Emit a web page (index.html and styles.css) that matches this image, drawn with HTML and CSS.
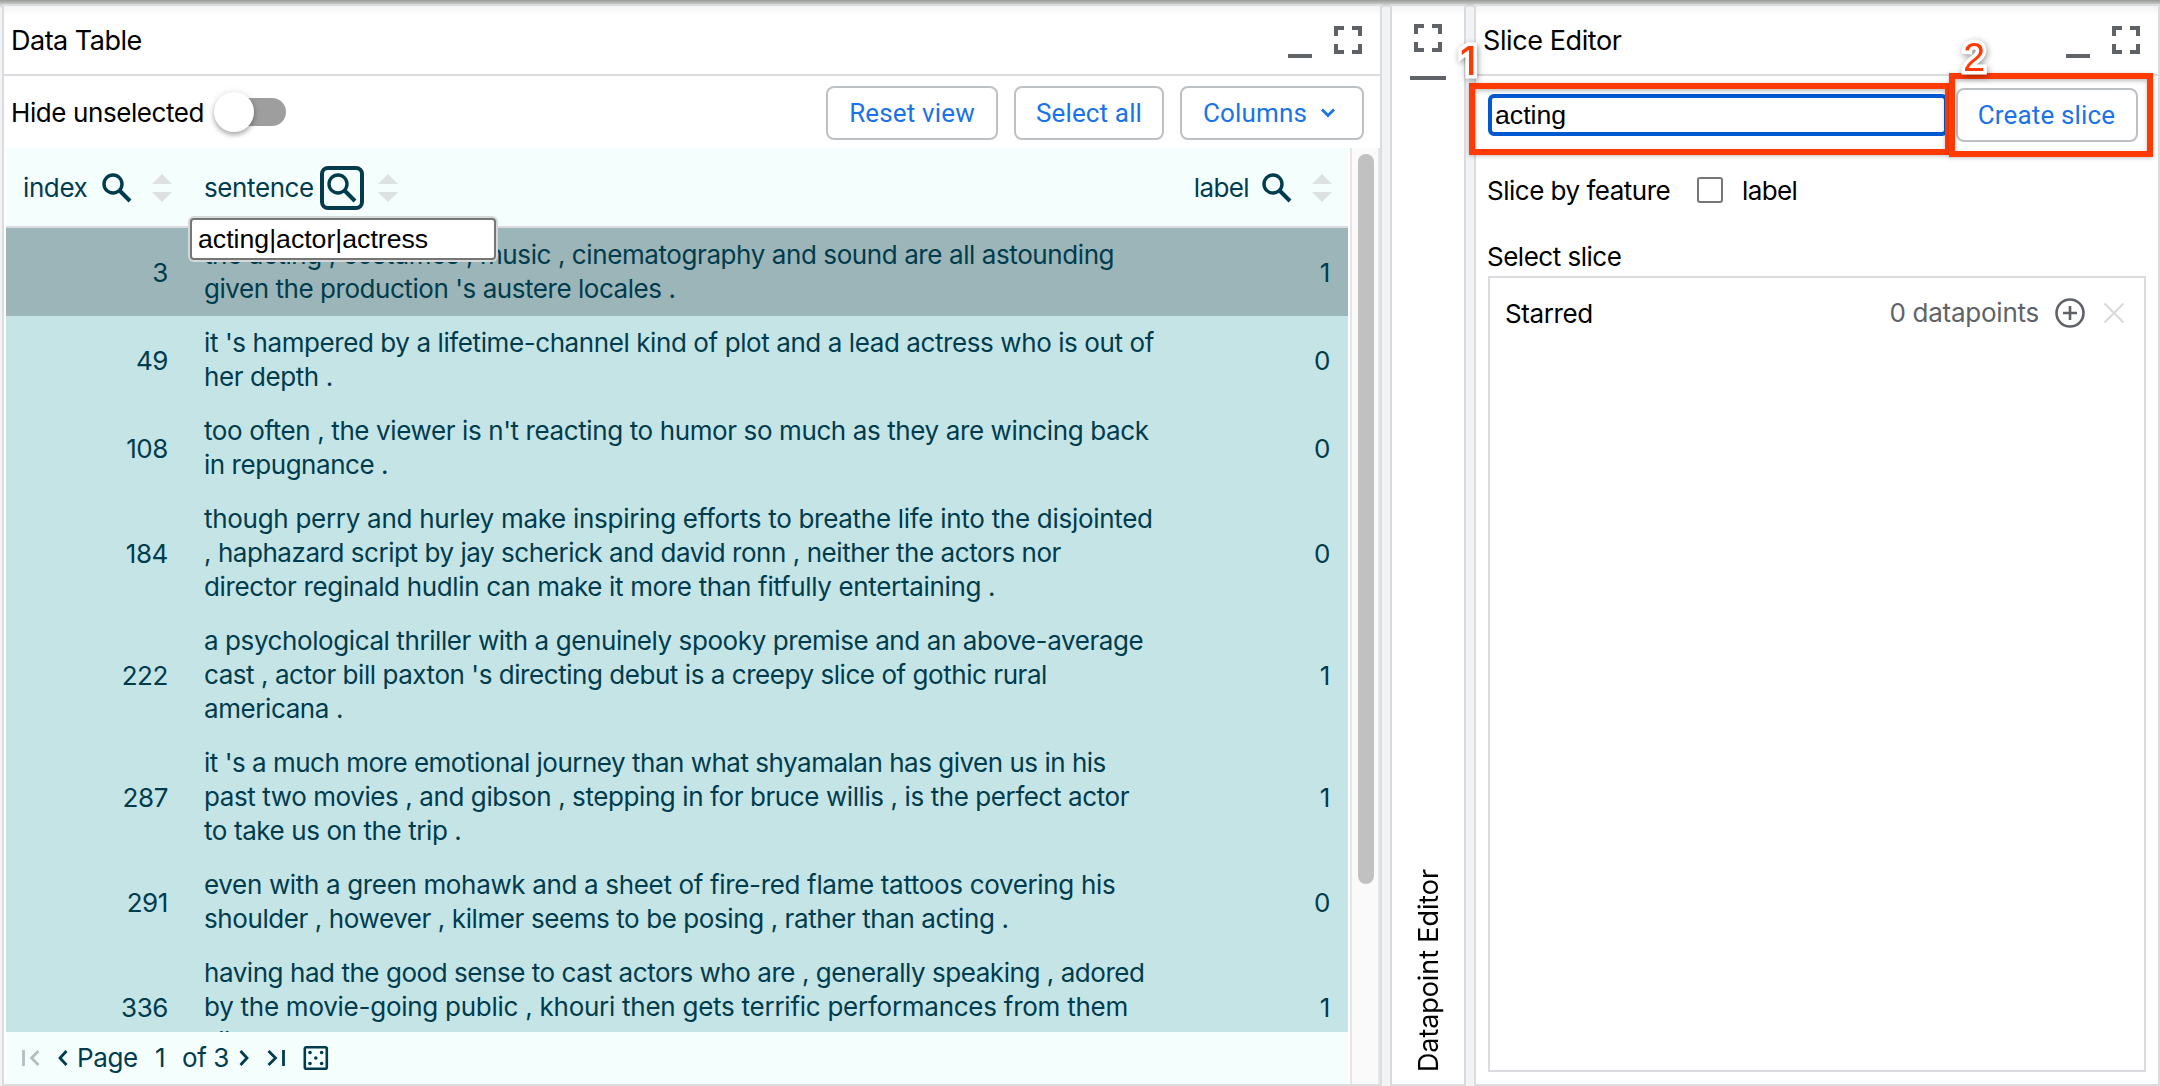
FILE: index.html
```
<!DOCTYPE html>
<html lang="en">
<head>
<meta charset="utf-8">
<title>Data Table and Slice Editor</title>
<link rel="stylesheet" href="styles.css">
</head>
<body>
<svg class="defs" aria-hidden="true">
  <symbol id="full" viewBox="0 0 28 28"><path d="M0 10V0H10V4H4V10ZM18 0H28V10H24V4H18ZM0 18H4V24H10V28H0ZM24 18H28V28H18V24H24Z" fill="#5f6368"/></symbol>
  <symbol id="search" viewBox="0 0 30 30"><circle cx="11" cy="11" r="9" fill="none" stroke="#003c4d" stroke-width="3.4"/><path d="M17.5 17.5L28 28" stroke="#003c4d" stroke-width="4"/></symbol>
  <symbol id="sort" viewBox="0 0 20 28"><path d="M0 10L10 0L20 10ZM0 18H20L10 28Z" fill="#dde1e1"/></symbol>
</svg>
<main class="app">
  <section class="panel data">
    <header class="head"><h1>Data Table</h1><div class="tools"><i class="min"></i><svg class="full"><use href="#full"/></svg></div></header>
    <div class="toolbar">
      <span class="hide">Hide unselected</span><span class="switch"><i></i></span>
      <div class="buttons">
        <button class="btn reset">Reset view</button>
        <button class="btn select">Select all</button>
        <button class="btn cols">Columns<svg width="16" height="10" viewBox="0 0 16 10"><path d="M2 1.5L8 7.5L14 1.5" fill="none" stroke="#1a73e8" stroke-width="2.8"/></svg></button>
      </div>
    </div>
    <div class="body">
      <div class="table">
        <div class="thead">
          <div class="th"><span class="t-index">index</span><svg class="search"><use href="#search"/></svg><svg class="sort"><use href="#sort"/></svg></div>
          <div class="th"><span class="t-sentence">sentence</span><span class="focus"><svg class="search"><use href="#search"/></svg></span><svg class="sort"><use href="#sort"/></svg>
            <div class="popup">acting|actor|actress</div></div>
          <div class="th last"><span class="t-label">label</span><svg class="search"><use href="#search"/></svg><svg class="sort"><use href="#sort"/></svg></div>
        </div>
        <div class="rows">
          <div class="row primary"><b>3</b><p>the acting , costumes , music , cinematography and sound are all astounding<br><span class="snug">given the production 's austere locales .</span></p><b>1</b></div>
          <div class="row"><b>49</b><p>it 's hampered by a lifetime-channel kind of plot and a lead actress who is out of<br>her depth .</p><b>0</b></div>
          <div class="row"><b>108</b><p><span class="open">too often , the viewer is n't reacting to humor so much as they are wincing back</span><br><span class="snug">in repugnance .</span></p><b>0</b></div>
          <div class="row"><b>184</b><p><span class="wide">though perry and hurley make inspiring efforts to breathe life into the disjointed</span><br><span class="snug">, haphazard script by jay scherick and david ronn , neither the actors nor</span><br><span class="roomy">director reginald hudlin can make it more than fitfully entertaining .</span></p><b>0</b></div>
          <div class="row"><b>222</b><p>a psychological thriller with a genuinely spooky premise and an above-average<br><span class="snug">cast , actor bill paxton 's directing debut is a creepy slice of gothic rural</span><br>americana .</p><b>1</b></div>
          <div class="row"><b>287</b><p><span class="tight">it 's a much more emotional journey than what shyamalan has given us in his</span><br>past two movies , and gibson , stepping in for bruce willis , is the perfect actor<br>to take us on the trip .</p><b>1</b></div>
          <div class="row"><b>291</b><p><span class="roomy">even with a green mohawk and a sheet of fire-red flame tattoos covering his</span><br>shoulder , however , kilmer seems to be posing , rather than acting .</p><b>0</b></div>
          <div class="row"><b>336</b><p><span class="snug">having had the good sense to cast actors who are , generally speaking , adored</span><br><span class="widest">by the movie-going public , khouri then gets terrific performances from them</span><br>all .</p><b>1</b></div>
        </div>
        <footer class="pager">
          <svg class="first" width="18" height="16" viewBox="0 0 18 16"><path d="M1.5 0V16M16.5 1L9.5 8L16.5 15" fill="none" stroke="#b4bdbf" stroke-width="2.8"/></svg>
          <svg class="prev" width="10" height="16" viewBox="0 0 10 16"><path d="M8.5 1L2 8L8.5 15" fill="none" stroke="#003c4d" stroke-width="2.8"/></svg>
          <span class="page">Page</span><span class="num">1</span><span class="of">of 3</span>
          <svg class="next" width="10" height="16" viewBox="0 0 10 16"><path d="M1.5 1L8 8L1.5 15" fill="none" stroke="#003c4d" stroke-width="2.8"/></svg>
          <svg class="lastp" width="18" height="16" viewBox="0 0 18 16"><path d="M16.5 0V16M1.5 1L8.5 8L1.5 15" fill="none" stroke="#003c4d" stroke-width="2.8"/></svg>
          <svg class="dice" width="26" height="26" viewBox="0 0 26 26"><rect x="1.8" y="2.3" width="22" height="21.4" rx="1.5" fill="none" stroke="#003c4d" stroke-width="2.6"/><g fill="#003c4d"><circle cx="7" cy="7.5" r="1.8"/><circle cx="18.6" cy="7.5" r="1.8"/><circle cx="12.8" cy="13" r="1.8"/><circle cx="7" cy="18.5" r="1.8"/><circle cx="18.6" cy="18.5" r="1.8"/></g></svg>
        </footer>
      </div>
      <div class="scroll"><i></i></div>
    </div>
  </section>

  <section class="panel point">
    <svg class="full"><use href="#full"/></svg><i class="min"></i>
    <h1>Datapoint Editor</h1>
  </section>

  <section class="panel slice">
    <header class="head"><h1>Slice Editor</h1><div class="tools"><i class="min"></i><svg class="full"><use href="#full"/></svg></div></header>
    <div class="create"><div class="name">acting</div><button class="btn">Create slice</button></div>
    <div class="feature"><span>Slice by feature</span><i class="check"></i><span class="flabel">label</span></div>
    <div class="caption">Select slice</div>
    <div class="list">
      <div class="item"><span class="starred">Starred</span><span class="count">0 datapoints</span>
        <svg class="add" width="32" height="32" viewBox="0 0 32 32"><circle cx="16" cy="16" r="13.5" fill="none" stroke="#5f6368" stroke-width="2.6"/><path d="M16 9V23M9 16H23" stroke="#5f6368" stroke-width="2.6"/></svg>
        <svg class="del" width="22" height="22" viewBox="0 0 22 22"><path d="M1.5 1.5L20.5 20.5M20.5 1.5L1.5 20.5" stroke="#dadce0" stroke-width="2.4"/></svg></div>
    </div>
  </section>
</main>
<div class="mark m1"></div><div class="mark m2"></div>
<span class="tag g1">1</span><span class="tag g2">2</span>
</body>
</html>
```
FILE: styles.css
```
*{box-sizing:border-box}
body{margin:0;width:2160px;height:1086px;overflow:hidden;position:relative;background:#f1f3f4;font:430 26px/34px Inter,sans-serif;letter-spacing:-.41px;color:#000;white-space:nowrap}
svg{display:block;flex:none}
.defs{position:absolute;width:0;height:0}
h1,p{margin:0;font:inherit}
i{display:block;flex:none}
.app{display:flex;gap:8px;height:1086px;padding:4px 0 0 2px;background:linear-gradient(#989b98,#c4c6c6 4px,#f1f3f4 8px)}
.panel{background:linear-gradient(#f4f4f5,#fff 10px);border:2px solid #dadce0;display:flex;flex-direction:column;flex:none}
.data{width:1380px}
.point{width:76px;align-items:center;position:relative}
.slice{width:686px}
.head{height:70px;border-bottom:2px solid #dadce0;display:flex;justify-content:space-between;padding-left:7px;flex:none}
.head h1{font-size:27px;letter-spacing:-.5px;padding-top:18px}
.slice .head h1{letter-spacing:-.4px}
.tools{display:flex;gap:22px;padding:20px 18px 0 0}
.min{width:24px;height:4px;background:#5f6368;margin-top:28px}
.full{width:28px;height:28px}
.toolbar{height:72px;display:flex;align-items:center;padding:0 16px 0 7px;flex:none}
.hide{width:194px;padding-top:1px}
.switch{width:64px;height:28px;border-radius:14px;background:#9e9e9e;margin-left:17px;position:relative}
.switch i{width:40px;height:40px;border-radius:50%;background:#fff;margin:-6px 0 0 -8px;box-shadow:0 3px 4px rgba(0,0,0,.25),0 1px 8px rgba(0,0,0,.14)}
.buttons{display:flex;gap:16px;margin-left:auto;padding-top:2px}
.btn{height:54px;border:2px solid #bdc1c6;border-radius:8px;background:#fff;color:#1a73e8;font:450 26px/34px Roboto,sans-serif;letter-spacing:.15px;padding:0 0 1px;text-align:center;display:flex;align-items:center;justify-content:center;flex:none}
.reset{width:172px}.select{width:150px}.cols{width:184px;gap:13px;padding-right:5px}
.body{display:flex;flex:1;min-height:0;padding-left:2px}
.table{width:1342px;color:#003c4d;display:flex;flex-direction:column}
.thead{height:80px;background:#f4fefd;border-bottom:2px solid #dadce0;display:grid;grid-template-columns:198px 656px 488px;flex:none}
.th{display:flex;align-items:center;position:relative;padding-top:2px}
.th .search{width:30px;height:30px}
.sort{width:20px;height:28px}
.t-index{width:79px;padding-left:17px;margin-right:17px;letter-spacing:-.4px}
.th>.search+.sort{margin-left:20px}
.t-sentence{width:116px;letter-spacing:-.4px}
.focus{width:44px;height:44px;border:4px solid #003c4d;border-radius:8px;padding:3px;box-shadow:0 0 0 2px #fff;margin-right:14px}
.last{justify-content:flex-end;padding-right:16px}
.t-label{margin-right:13px;letter-spacing:-.6px}
.popup{position:absolute;left:-14px;top:70px;width:306px;height:42px;border:2px solid #767676;border-radius:4px;box-shadow:0 0 0 2px #d5d8d8;background:#fff;color:#000;font:26.667px/36px "Liberation Sans",sans-serif;letter-spacing:0;padding:1px 6px;z-index:2}
.rows{flex:1;min-height:0;overflow:hidden;background:#c5e4e6}
.row{display:grid;grid-template-columns:162px 1fr 20px;align-items:center;padding:10px 18px 10px 0;background:#c5e4e6}
.primary{background:#9cb5b8}
.row b{font-weight:430;text-align:right;padding-top:1px}
.row p{padding-left:36px}
.tight{letter-spacing:-.49px}
.snug{letter-spacing:-.45px}
.open{letter-spacing:-.39px}
.roomy{letter-spacing:-.34px}
.wide{letter-spacing:-.29px}
.widest{letter-spacing:-.26px}
.pager{height:52px;background:#f4fefd;display:flex;align-items:center;padding:0 0 0 16px;flex:none}
.prev{margin-left:18px}
.page{width:87px;padding-left:9px}
.num{width:27px}
.of{width:57px}
.lastp{margin-left:18px}
.dice{margin-left:18px}
.scroll{width:30px;margin-left:2px;background:#fafafa;border:solid #e4e5e6;border-width:0 2px;padding:6px 0 0 6px}
.scroll i{width:16px;height:730px;border-radius:8px;background:#c1c1c1}
.point .full{margin-top:18px}
.point .min{width:36px;margin-top:24px}
.point h1{writing-mode:vertical-rl;transform:rotate(180deg);font-size:27px;letter-spacing:-.1px;margin:auto 0 12px 2px}
.create{display:flex;gap:8px;padding:12px 20px 0 12px;height:72px}
.name{width:460px;height:42px;margin-top:6px;border:4px solid #0059d0;border-radius:6px;font:26.667px/34px "Liberation Sans",sans-serif;letter-spacing:0;padding-left:3px}
.create .btn{width:182px;padding-right:1px}
.feature{display:flex;align-items:center;height:34px;margin:25px 0 0 12px;letter-spacing:-.5px}
.feature>span{padding-top:2px}
.feature>span:first-child{width:210px;margin-left:-1px}
.check{width:26px;height:26px;border:2px solid #767676;border-radius:3px;margin-right:19px}
.flabel{letter-spacing:-.6px}
.caption{margin:33px 0 0 11px;height:34px;letter-spacing:-.5px}
.list{margin:2px 12px 12px;flex:1;border:2px solid #dadce0}
.item{display:flex;align-items:center;height:68px;padding:2px 19px 0 15px}
.starred{margin-right:auto;padding-top:2px}
.count{color:#5f6368;letter-spacing:-.25px}
.add{margin-left:15px}
.del{margin-left:17px}
.mark{position:absolute;border:6px solid #ff3a05;box-shadow:0 1px 4px rgba(0,0,0,.25),inset 0 2px 4px rgba(0,0,0,.25)}
.m1{left:1469px;top:83px;width:482px;height:72px}
.m2{left:1949px;top:73px;width:204px;height:84px}
.tag{position:absolute;font:450 40px/40px Inter,sans-serif;color:#ff3a05;letter-spacing:0;-webkit-text-stroke:7px #fff;paint-order:stroke fill;filter:drop-shadow(1px 2px 3px rgba(0,0,0,.4))}
.g1{left:1460px;top:41px}
.g2{left:1963px;top:37px;font-family:"Liberation Sans",sans-serif}
```
